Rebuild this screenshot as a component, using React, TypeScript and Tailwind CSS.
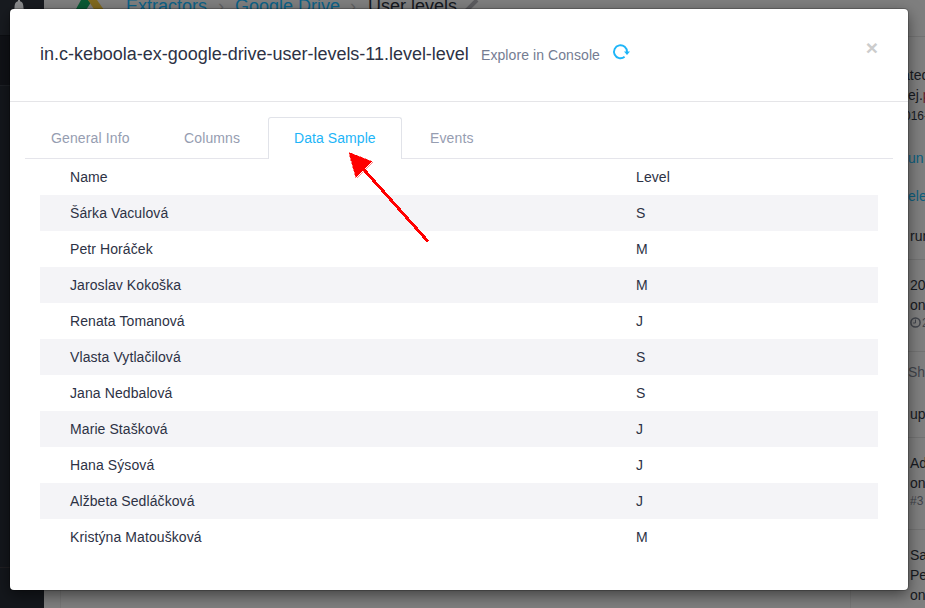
import React from "react";

const rows: [string, string][] = [
  ["Name", "Level"],
  ["Šárka Vaculová", "S"],
  ["Petr Horáček", "M"],
  ["Jaroslav Kokoška", "M"],
  ["Renata Tomanová", "J"],
  ["Vlasta Vytlačilová", "S"],
  ["Jana Nedbalová", "S"],
  ["Marie Stašková", "J"],
  ["Hana Sýsová", "J"],
  ["Alžbeta Sedláčková", "J"],
  ["Kristýna Matoušková", "M"],
];

function Sidebar() {
  return (
    <nav className="flex w-[44px] shrink-0 flex-col bg-[#14171c]">
      <div className="flex h-9 justify-center border-b border-[#0c0e12] bg-[#181b20] pr-1.5">
        <svg width="14" height="14" viewBox="0 0 14 14" className="text-[#8b8c8e]" fill="currentColor">
          <path d="M6 0h2v1.200c2.500.6 3.500 2.300 3.500 7.300l2 2H.5l2-2C2.500 3.500 3.500 1.800 6 1.200z" />
        </svg>
      </div>
      <div className="h-[50px] border-b border-[#1d2025] bg-[#101217]" />
      <div className="h-[482px] border-b border-[#211f22]" />
    </nav>
  );
}

function Breadcrumbs() {
  return (
    <header className="flex h-[37px] items-start overflow-hidden border-b border-[#737373] pl-[31px] text-[18px] leading-[21px] text-[#0c6288]">
      <svg width="34" height="14" viewBox="0 0 34 14" className="shrink-0">
        <path d="M6 0H13L15.500 3 11 10H.5z" fill="#0b5a35" />
        <path d="M13 0H22L29 10H19.500z" fill="#80691f" />
      </svg>
      <div className="-mt-[4px] ml-[17px] flex whitespace-nowrap">
        <span className="w-[84px]">Extractors</span>
        <span className="w-[25px] pl-2 text-[#646464]">›</span>
        <span className="w-[107px]">Google Drive</span>
        <span className="w-[26px] pl-2 text-[#646464]">›</span>
        <span className="w-[96px] text-[#151820]">User levels</span>
        <svg width="16" height="16" viewBox="0 0 16 16" className="mt-[1px]">
          <path d="M2 14 13 3" stroke="#5c5c5f" strokeWidth="4" />
        </svg>
      </div>
    </header>
  );
}

function Details() {
  return (
    <aside className="flex w-[17px] flex-col overflow-hidden whitespace-nowrap text-[14px] leading-5 text-[#171a21]">
      <div className="h-[28px]" />
      <div className="-ml-[6px] h-5">ated</div>
      <div className="h-5">ej.<span className="text-[#642331]">p</span></div>
      <div className="-ml-[4px] h-[43px] text-[12px] leading-[22px]">016-</div>
      <div className="h-[38px] text-[#0d607f]">un</div>
      <div className="h-[40px] text-[#0d607f]">ele</div>
      <div className="h-[33px] pl-[2px]">run</div>
      <div className="h-4 border-t border-[#737373]" />
      <div className="h-5 pl-[2px]">20</div>
      <div className="h-5 pl-[2px]">on</div>
      <div className="flex h-[36px] items-start gap-px pl-[2px] text-[12px] leading-4 text-[#42454c]">
        <svg width="11" height="11" viewBox="0 0 11 11" fill="none" stroke="currentColor" strokeWidth="1.500" className="mt-[2px] shrink-0">
          <circle cx="5.500" cy="5.500" r="4.600" />
          <path d="M5.500 2.500V6H3.200" strokeWidth="1" />
        </svg>
        2
      </div>
      <div className="h-[11px] border-t border-[#737373]" />
      <div className="h-[42px] text-[#42454c]">Sho</div>
      <div className="h-[33px] pl-[2px]">up</div>
      <div className="h-4 border-t border-[#737373]" />
      <div className="h-5 pl-[2px]">Ad</div>
      <div className="h-5 pl-[2px]">on</div>
      <div className="h-[36px] pl-[2px] text-[12px] leading-[16px] text-[#42454c]">#3</div>
      <div className="h-4 border-t border-[#737373]" />
      <div className="h-5 pl-[2px]">Sa</div>
      <div className="h-5 pl-[2px]">Pe</div>
      <div className="h-5 pl-[2px]">on</div>
    </aside>
  );
}

function Modal() {
  return (
    <section className="absolute left-[10px] top-[9px] flex h-[581px] w-[898px] flex-col rounded-[4px] bg-white shadow-[0_5px_15px_rgba(0,0,0,0.5),0_0_0_1px_rgba(0,0,0,0.2)]">
      <header className="flex h-[93px] items-start border-b border-[#e5e5e8] pl-[30px] pr-[30px]">
        <h1 className="w-[441px] whitespace-nowrap pt-[33px] text-[18px] leading-6 tracking-[-0.02px] text-[#2d3245]">in.c-keboola-ex-google-drive-user-levels-11.level-level</h1>
        <span className="w-[119px] whitespace-nowrap pt-[36px] text-[14px] leading-5 tracking-[0.08px] text-[#747c92]">Explore in Console</span>
        <svg width="19" height="18" viewBox="0 0 19 18" className="ml-[12px] mt-[34px]">
          <path d="M12.600 13.800A6.500 6.500 0 1 1 15 9" fill="none" stroke="#1eb5f8" strokeWidth="1.900" />
          <path d="M12 8.500H18L15 12z" fill="#1eb5f8" />
        </svg>
        <button className="ml-auto pt-[25px] text-[21px] font-bold leading-[27px] text-[#ccc]">×</button>
      </header>
      <nav className="mx-[15px] mt-[15px] flex h-[42px] shrink-0 border-b border-[#e5e5eb] text-[14px] leading-[42px] tracking-[0.13px] text-[#969db1]">
        <span className="w-[133px] pl-[26px]">General Info</span>
        <span className="w-[110px] pl-[26px]">Columns</span>
        <span className="h-[42px] w-[134px] rounded-t-[3px] border border-b-0 border-[#e1e3e9] bg-white pl-[25px] leading-10 tracking-[0.07px] text-[#1eb5f8]">Data Sample</span>
        <span className="pl-[28px]">Events</span>
      </nav>
      <div className="mx-[30px] text-[14px] leading-9 tracking-[0.09px] text-[#2d3245]">
        {rows.map(([name, level]) => (
          <div key={name} className="flex h-9 pl-[30px] even:bg-[#f4f4f7]">
            <span className="w-[566px]">{name}</span>
            <span>{level}</span>
          </div>
        ))}
      </div>
      <svg width="82" height="92" viewBox="0 0 82 92" className="absolute left-[338px] top-[142px]" shapeRendering="crispEdges">
        <path d="M10 12 80 90.500" stroke="#f00" strokeWidth="3" />
        <path d="M1 1.500 24 10.500 8 26.500z" fill="#f00" stroke="#f00" strokeWidth="0.500" />
      </svg>
    </section>
  );
}

export default function App() {
  return (
    <main className="relative flex h-[608px] w-[925px] overflow-hidden bg-[#7f7f7f] font-['Liberation_Sans',Arial,sans-serif]">
      <Sidebar />
      <div className="flex min-w-0 flex-1 flex-col">
        <Breadcrumbs />
        <div className="flex flex-1">
          <div className="ml-[16px] w-[791px] border-x border-[#777]" />
          <div className="w-[57px]" />
          <Details />
        </div>
      </div>
      <Modal />
    </main>
  );
}
